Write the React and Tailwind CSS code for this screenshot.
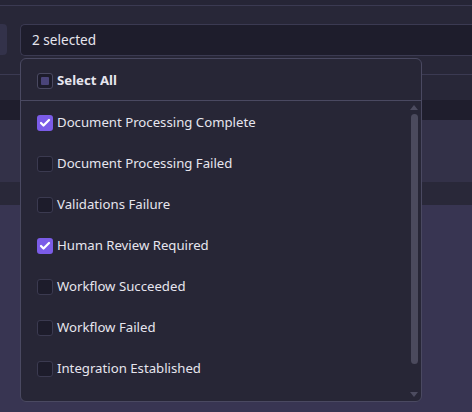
import { Check } from "lucide-react";

const options = [
  { label: "Document Processing Complete", checked: true },
  { label: "Document Processing Failed", checked: false },
  { label: "Validations Failure", checked: false },
  { label: "Human Review Required", checked: true },
  { label: "Workflow Succeeded", checked: false },
  { label: "Workflow Failed", checked: false },
  { label: "Integration Established", checked: false },
];

function Box({ checked }) {
  if (checked) {
    return (
      <span className="flex h-4 w-4 shrink-0 items-center justify-center rounded-[3px] bg-[#7b5ce8]">
        <Check size={12} strokeWidth={4.5} className="text-white" />
      </span>
    );
  }
  return <span className="h-4 w-4 shrink-0 rounded-[3px] border border-[#3b3a50] bg-[#1d1c2b]" />;
}

export default function App() {
  return (
    <div
      className="relative h-[412px] w-[472px] overflow-hidden bg-[#383552] text-[13.2px] text-[#e6e5ee]"
      style={{ fontFamily: '"Noto Sans", "Open Sans", sans-serif' }}
    >
      {/* page behind */}
      <div className="h-[6px] border-b border-[#3b3a52] bg-[#262536]" />
      <div className="flex h-[69px] items-start gap-[13px] border-b border-[#3b3a52] bg-[#282738] pt-[18px]">
        <div className="h-[31px] w-[7px] shrink-0 rounded-r-[4px] bg-[#33324a]" />
        <div className="flex h-[32px] flex-1 items-center rounded-l-[5px] border border-r-0 border-[#3b3a52] bg-[#1e1d2c] pl-[11px] pt-[1px] text-[13.6px]">
          2 selected
        </div>
      </div>
      <div className="h-[25px] bg-[#282738]" />
      <div className="h-[20px] bg-[#1f1e2d]" />
      <div className="h-[62px] bg-[#333148]" />
      <div className="h-[23px] bg-[#292839]" />

      {/* dropdown */}
      <div className="absolute left-[20px] top-[58px] flex h-[344px] w-[402px] flex-col rounded-[6px] border border-[#4a4961] bg-[#272636]">
        <div className="flex h-[42px] shrink-0 items-center gap-[4px] border-b border-[#4a4961] pl-[16px] pt-[2px]">
          <span className="flex h-4 w-4 items-center justify-center rounded-[3px] border border-[#4a4961] bg-[#1d1c2b]">
            <span className="h-[8px] w-[8px] rounded-[1px] bg-[#4a4479]" />
          </span>
          <span className="font-bold">Select All</span>
        </div>
        <div className="relative flex-1">
          <div className="flex flex-col pt-[1px]">
            {options.map((o) => (
              <div key={o.label} className="flex h-[41px] items-center gap-[4px] pl-[16px]">
                <Box checked={o.checked} />
                <span>{o.label}</span>
              </div>
            ))}
          </div>
          {/* scrollbar */}
          <div className="absolute right-[2px] top-[3px] bottom-[3px] flex w-[10px] flex-col items-center">
            <svg width="10" height="6" viewBox="0 0 10 6">
              <path d="M1 6 L5 1 L9 6 Z" fill="#4d4c60" />
            </svg>
            <div className="mt-[4px] h-[250px] w-[7px] rounded-full bg-[#4b4a5d]" />
            <div className="flex-1" />
            <svg width="10" height="6" viewBox="0 0 10 6">
              <path d="M1 0 L5 5 L9 0 Z" fill="#4d4c60" />
            </svg>
          </div>
        </div>
      </div>
    </div>
  );
}
